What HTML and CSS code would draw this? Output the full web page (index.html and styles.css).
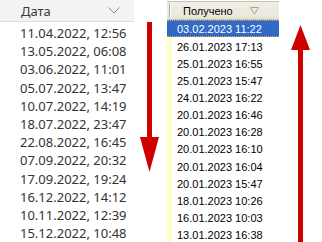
FILE: index.html
```html
<!DOCTYPE html>
<html>
<head>
<meta charset="utf-8">
<link rel="stylesheet" href="styles.css">
</head>
<body>
<div class="page">
  <div class="left">
    <div class="lhead">
      <span class="ltitle">Дата</span>
      <svg class="chev" width="12" height="7" viewBox="0 0 12 7"><polyline points="0.5,0.5 6,6 11.5,0.5" fill="none" stroke="#8a8a8a" stroke-width="1"/></svg>
    </div>
    <div class="lrows">
      <div class="lrow">11.04.2022, 12:56</div>
      <div class="lrow">13.05.2022, 06:08</div>
      <div class="lrow">03.06.2022, 11:01</div>
      <div class="lrow">05.07.2022, 13:47</div>
      <div class="lrow">10.07.2022, 14:19</div>
      <div class="lrow">18.07.2022, 23:47</div>
      <div class="lrow">22.08.2022, 16:45</div>
      <div class="lrow">07.09.2022, 20:32</div>
      <div class="lrow">17.09.2022, 19:24</div>
      <div class="lrow">16.12.2022, 14:12</div>
      <div class="lrow">10.11.2022, 12:39</div>
      <div class="lrow">15.12.2022, 10:48</div>
    </div>
  </div>
  <div class="arrowcol a1">
    <svg width="33" height="242" viewBox="0 0 33 242">
      <rect x="13" y="22" width="5" height="118" fill="#cf0000"/>
      <polygon points="6,137 25,137 15.5,172" fill="#cf0000"/>
    </svg>
  </div>
  <div class="right">
    <div class="rhead">
      <span class="sep"></span>
      <span class="rtitle">Получено</span>
      <svg class="tri" width="9" height="8" viewBox="0 0 9 8"><polygon points="0.5,0.5 8.5,0.5 4.5,7" fill="none" stroke="#a7a595" stroke-width="1"/></svg>
    </div>
    <div class="rrows">
      <div class="rrow sel">03.02.2023 11:22</div>
      <div class="rrow">26.01.2023 17:13</div>
      <div class="rrow">25.01.2023 16:55</div>
      <div class="rrow">25.01.2023 15:47</div>
      <div class="rrow">24.01.2023 16:22</div>
      <div class="rrow">20.01.2023 16:46</div>
      <div class="rrow">20.01.2023 16:28</div>
      <div class="rrow">20.01.2023 16:10</div>
      <div class="rrow">20.01.2023 16:04</div>
      <div class="rrow">20.01.2023 15:47</div>
      <div class="rrow">18.01.2023 10:26</div>
      <div class="rrow">16.01.2023 10:03</div>
      <div class="rrow">13.01.2023 16:38</div>
    </div>
  </div>
  <div class="arrowcol a2">
    <svg width="43" height="242" viewBox="0 0 43 242">
      <rect x="19" y="48" width="5" height="194" fill="#cf0000"/>
      <polygon points="12,50 31,50 21.5,25" fill="#cf0000"/>
    </svg>
  </div>
</div>
</body>
</html>
```

FILE: styles.css
```css
html, body {
  margin: 0;
  padding: 0;
  background: #ffffff;
}
.page {
  display: flex;
  width: 322px;
  height: 242px;
  overflow: hidden;
}
.left {
  width: 134px;
  flex: none;
  font-family: "Noto Sans", "Open Sans", sans-serif;
}
.lhead {
  height: 21px;
  background: #f3f3f3;
  border-bottom: 1px solid #dedede;
  display: flex;
  align-items: center;
}
.ltitle {
  margin-left: 21px;
  font-size: 13px;
  color: #3c3c3c;
}
.chev {
  margin-left: 57px;
}
.lrows {
  padding-top: 2px;
}
.lrow {
  height: 18.2px;
  line-height: 18.2px;
  padding-left: 20px;
  font-size: 13px;
  color: #333333;
  white-space: nowrap;
}
.arrowcol {
  flex: none;
  height: 242px;
}
.arrowcol svg {
  display: block;
}
.a1 { width: 33px; }
.a2 { width: 43px; }
.right {
  width: 112px;
  flex: none;
  font-family: "Liberation Sans", Arial, sans-serif;
  font-size: 11px;
  display: flex;
  flex-direction: column;
}
.rhead {
  height: 20px;
  margin-top: 1px;
  border-top: 1px solid #c4c2b6;
  border-bottom: 1px solid #cbc7b8;
  background: linear-gradient(#f0eee5, #ebe9dc 80%, #e2e0d3);
  display: flex;
  align-items: center;
  color: #000;
}
.sep {
  width: 1px;
  height: 14px;
  margin-left: 2px;
  background: #aca899;
  box-shadow: 1px 0 0 #ffffff;
}
.rtitle {
  margin-left: 13px;
  padding-top: 2px;
}
.tri {
  margin-left: 17px;
  margin-top: 2px;
}
.rrows {
  flex: 1;
  background: linear-gradient(90deg, #fefec8 0, #fefec8 5px, #ffffff 5px);
}
.rrow {
  height: 17.1px;
  line-height: 16px;
  padding-top: 2px;
  padding-left: 10px;
  color: #000;
  white-space: nowrap;
  box-sizing: border-box;
}
.rrow.sel {
  background: #316ac5;
  color: #ffffff;
  border-top: 1px dotted #e8a43c;
  border-bottom: 1px dotted #e8a43c;
  padding-top: 1px;
  line-height: 15px;
}
```
